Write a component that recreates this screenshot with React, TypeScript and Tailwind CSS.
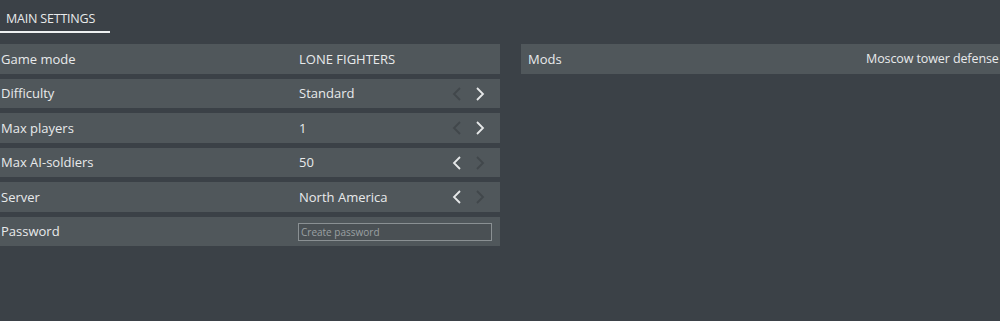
import React from 'react'

type Row = {
  label: string
  value?: string
  prev?: boolean
  next?: boolean
  input?: boolean
}

const rows: Row[] = [
  { label: 'Game mode', value: 'LONE FIGHTERS' },
  { label: 'Difficulty', value: 'Standard', prev: false, next: true },
  { label: 'Max players', value: '1', prev: false, next: true },
  { label: 'Max AI-soldiers', value: '50', prev: true, next: false },
  { label: 'Server', value: 'North America', prev: true, next: false },
  { label: 'Password', input: true },
]

const Chevron = ({ dir, on }: { dir: 'l' | 'r'; on: boolean }) => (
  <svg width="10" height="16" viewBox="0 0 10 16" className={on ? 'text-[#e6e8e9]' : 'text-[#41474b]'}>
    <path
      d={dir === 'l' ? 'M8 2 L2 8 L8 14' : 'M2 2 L8 8 L2 14'}
      fill="none"
      stroke="currentColor"
      strokeWidth="1.8"
    />
  </svg>
)

const App = () => {
  return (
    <div className="w-[1000px] h-[321px] overflow-hidden bg-[#3b4147] text-[#e8eaeb] text-[13px] font-['Open_Sans',sans-serif]">
      {/* Tabs */}
      <div className="h-[44px] pt-[8px]">
        <div className="w-[110px] h-[25px] border-b-2 border-[#eef0f1] pl-[6px] leading-[21px] text-[12.5px] tracking-[-0.2px]">
          MAIN SETTINGS
        </div>
      </div>

      <div className="flex gap-[21px]">
        {/* Main settings */}
        <div className="w-[500px] flex flex-col gap-[5px]">
          {rows.map((row) => (
            <div key={row.label} className="h-[29.5px] bg-[#50575b] flex items-center pt-[1px]">
              <div className="w-[298px] pl-[1px]">{row.label}</div>
              {row.input ? (
                <div className="w-[194px] h-[18px] border border-[#8a9093] bg-[#4a5054] text-[10px] text-[#9aa0a3] leading-[16px] pl-[2px]">
                  Create password
                </div>
              ) : (
                <>
                  <div className="flex-1 pl-[1px]">{row.value}</div>
                  {row.prev !== undefined && (
                    <div className="flex gap-[13px] pr-[15px]">
                      <Chevron dir="l" on={!!row.prev} />
                      <Chevron dir="r" on={!!row.next} />
                    </div>
                  )}
                </>
              )}
            </div>
          ))}
        </div>

        {/* Mods */}
        <div className="flex-1 min-w-0">
          <div className="h-[29.5px] bg-[#50575b] flex items-center pl-[7px] pt-[1px] whitespace-nowrap">
            <span className="w-[338px] shrink-0">Mods</span>
            <span className="shrink-0 text-[12.5px] tracking-[-0.1px]">Moscow tower defense</span>
          </div>
        </div>
      </div>
    </div>
  )
}

export default App
